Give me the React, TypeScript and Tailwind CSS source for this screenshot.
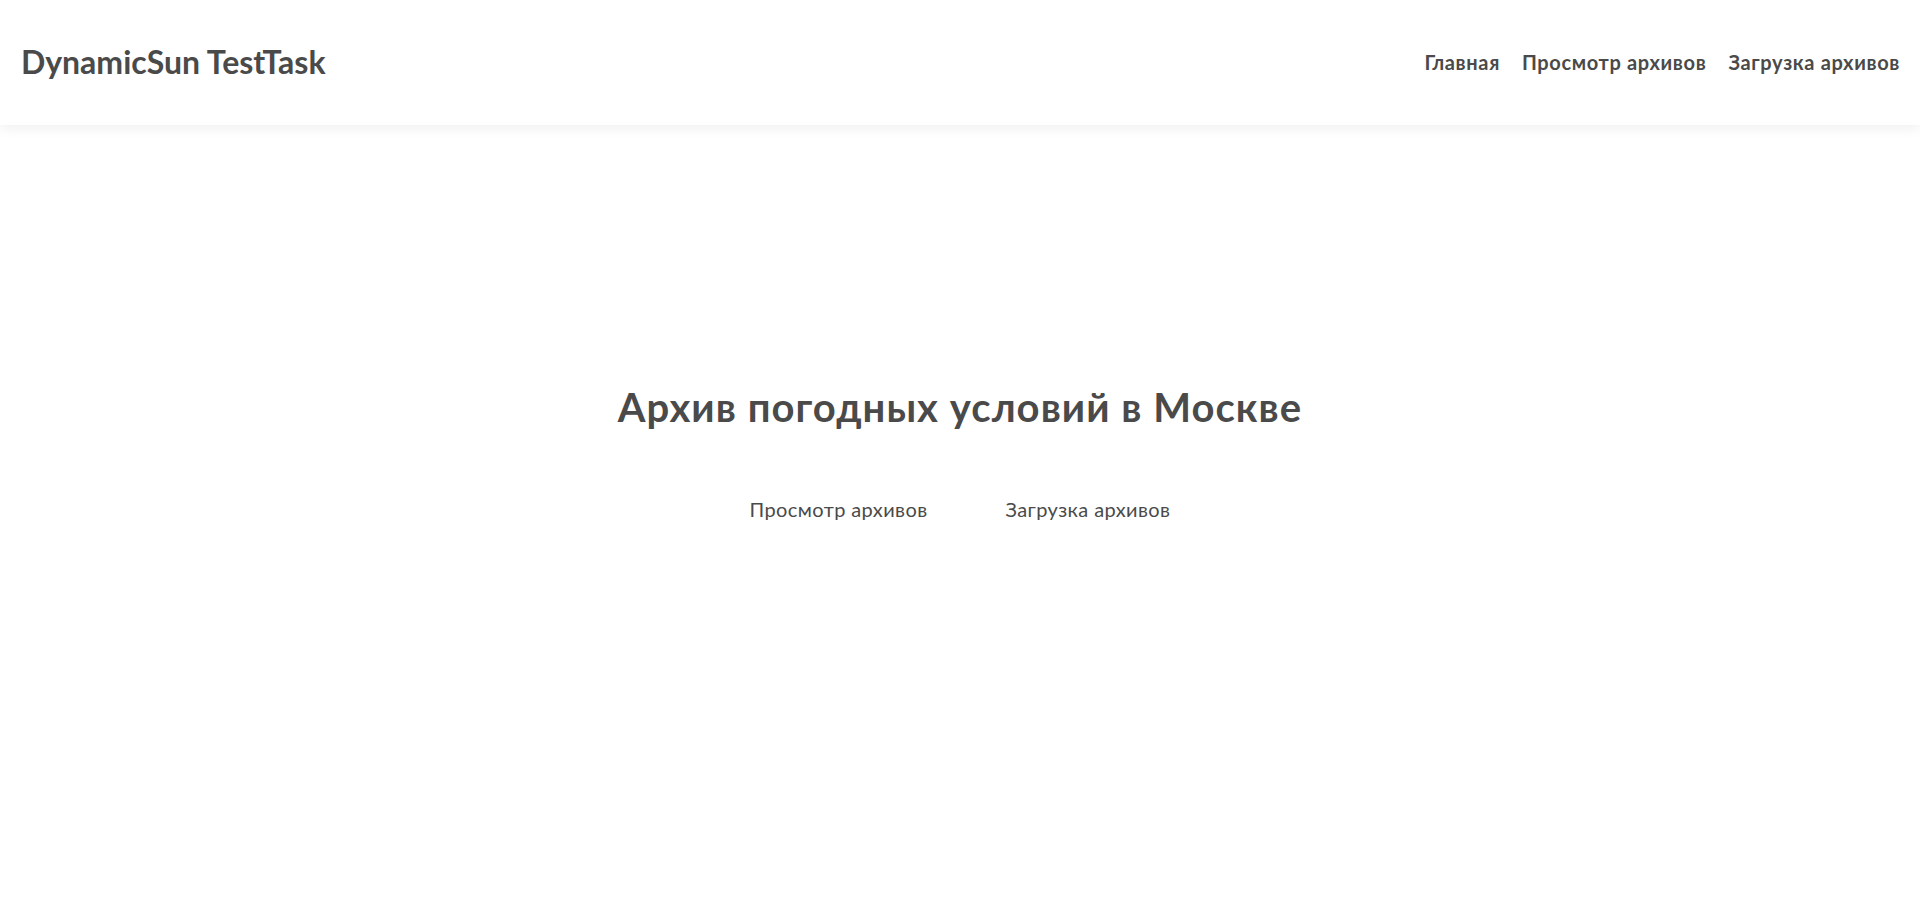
export default function App() {
  const font = { fontFamily: "Lato, 'Noto Sans', sans-serif" };
  return (
    <div className="min-h-screen bg-white text-[#4a4a4a]" style={font}>
      <header className="h-[125px] flex items-center justify-between pl-[21px] pr-[20px] pb-[2px] bg-white shadow-[0_4px_12px_rgba(0,0,0,0.06)]">
        <a className="text-[32px] font-bold leading-none">DynamicSun TestTask</a>
        <nav className="flex items-center gap-[22px] text-[20px] font-bold tracking-[0.65px]">
          <a>Главная</a>
          <a>Просмотр архивов</a>
          <a>Загрузка архивов</a>
        </nav>
      </header>
      <main className="flex flex-col items-center pt-[258px]">
        <h1 className="text-[40px] leading-[1.2] font-bold tracking-[1.05px]">Архив погодных условий в Москве</h1>
        <div className="mt-[63px] flex gap-[78px] text-[20px] leading-[1.5] tracking-[0.4px]">
          <a>Просмотр архивов</a>
          <a>Загрузка архивов</a>
        </div>
      </main>
    </div>
  );
}
